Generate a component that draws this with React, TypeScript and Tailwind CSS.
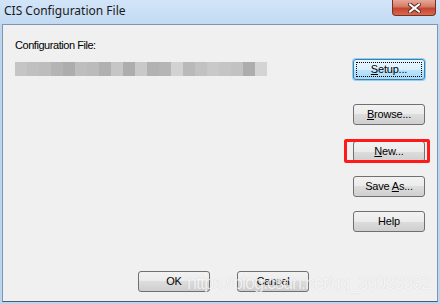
import React from 'react';

const blocks = [
  '#c5c5c5', '#c0c0c0', '#bdbdbd', '#b4b4b4', '#adadad', '#bebebe', '#bbbbbb',
  '#b0b0b0', '#c6c6c6', '#adadad', '#c9c9c9', '#b2b2b2', '#b5b5b5', '#d2d2d2',
  '#b9b9b9', '#c2c2c2', '#c9c9c9', '#c5c5c5', '#c2c2c2', '#adadad', '#d4d4d4',
];

const WinButton: React.FC<{ label: string; hot?: number; focused?: boolean }> = ({ label, hot, focused }) => {
  const chars = label.split('');
  return (
    <button
      className={
        'relative w-[72px] h-[21px] rounded-[3px] border text-[11px] leading-none text-black flex items-center justify-center ' +
        (focused
          ? 'border-[#3c7fb1] bg-[linear-gradient(#eaf6fd_0%,#d9f0fc_50%,#bee6fd_50%,#a7d9f5_100%)] shadow-[0_0_0_1px_#8dd0f5]'
          : 'border-[#707070] bg-[linear-gradient(#f2f2f2_0%,#ebebeb_50%,#dddddd_50%,#cfcfcf_100%)]')
      }
      style={{ fontFamily: '"Liberation Sans", Arial, sans-serif' }}
    >
      {focused && <span className="absolute inset-[2px] border border-dotted border-black" />}
      <span className="tracking-[-0.2px]">
        {chars.map((c, i) => (
          <span key={i} className={i === hot ? 'underline underline-offset-1' : ''}>
            {c}
          </span>
        ))}
      </span>
    </button>
  );
};

export default function App() {
  return (
    <div className="relative w-[440px] h-[304px] bg-[#bcd6f0] flex flex-col overflow-hidden">
      <div className="h-[24px] flex items-start bg-[linear-gradient(#d3e5f8,#c2daf3)]">
        <div
          className="pl-[4px] pt-[3px] text-[12px] text-[#1a1a1a] leading-[16px]"
          style={{ fontFamily: '"Noto Sans", "Open Sans", sans-serif' }}
        >
          CIS Configuration File
        </div>
        <div className="ml-auto mr-[4px] w-[44px] h-[16px] rounded-b-[4px] border border-t-0 border-[#7a2f22] bg-[linear-gradient(#e6a897_0%,#d47a66_45%,#c4452e_55%,#d66a50_100%)] flex items-center justify-center">
          <svg width="13" height="10" viewBox="0 0 13 10">
            <path d="M2 1.5 L11 8.5 M11 1.5 L2 8.5" stroke="#5a2a24" strokeWidth="4" strokeLinecap="square" />
            <path d="M2 1.5 L11 8.5 M11 1.5 L2 8.5" stroke="#ffffff" strokeWidth="2" strokeLinecap="square" />
          </svg>
        </div>
      </div>

      <div className="ml-[2px] mr-[2px] mb-[2px] flex-1 flex flex-col bg-[#f0f0f0] border border-[#8196ae] border-b-[#4d5b6b]">
        <div className="flex flex-1">
          <div className="flex-1 pl-[12px] pt-[14px]">
            <div
              className="text-[11px] leading-[13px] text-black tracking-[-0.45px]"
              style={{ fontFamily: '"Liberation Sans", Arial, sans-serif' }}
            >
              Configuration File:
            </div>
            <div className="mt-[10px] flex h-[14px]">
              {blocks.map((c, i) => (
                <div key={i} className="w-[12px] h-full" style={{ backgroundColor: c }} />
              ))}
            </div>
          </div>
          <div className="flex flex-col pr-[12px] pt-[34px]">
            <WinButton label="Setup..." hot={0} focused />
            <div className="mt-[24px]">
              <WinButton label="Browse..." hot={0} />
            </div>
            <div className="mt-[16px]">
              <WinButton label="New..." hot={0} />
            </div>
            <div className="mt-[14px]">
              <WinButton label="Save As..." hot={5} />
            </div>
            <div className="mt-[14px]">
              <WinButton label="Help" />
            </div>
          </div>
        </div>
        <div className="flex gap-[27px] pl-[135px] pb-[9px]">
          <WinButton label="OK" />
          <WinButton label="Cancel" />
        </div>
      </div>

      <div className="absolute left-[344px] top-[139px] w-[86px] h-[24px] border-[3px] border-[#ff1a1a] rounded-[2px]" />
      <div
        className="absolute left-[187px] top-[272px] text-[18px] leading-[22px] tracking-[-1px] text-white/80 [text-shadow:0_0_1px_rgba(0,0,0,0.18)]"
        style={{ fontFamily: '"Liberation Sans", Arial, sans-serif' }}
      >
        https://blog.csdn.net/qq_36033382
      </div>
    </div>
  );
}
